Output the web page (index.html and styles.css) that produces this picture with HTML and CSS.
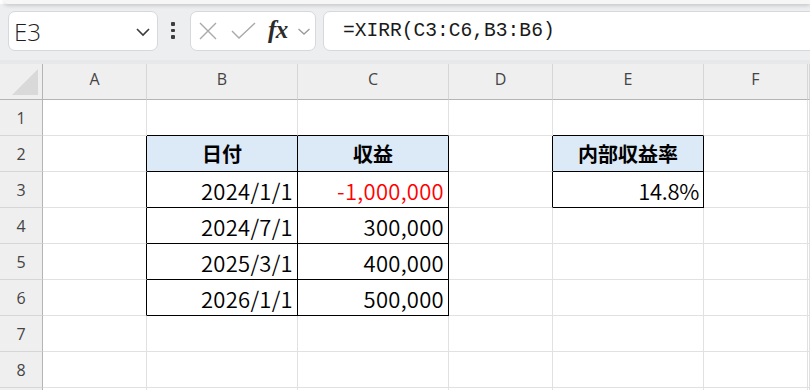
FILE: index.html
```html
<!DOCTYPE html>
<html lang="ja">
<head>
<meta charset="utf-8">
<title>XIRR</title>
<link rel="stylesheet" href="styles.css">
</head>
<body>
<div class="ribbon"></div>
<div class="toolbar">
  <div class="namebox">
    <span class="nb-text">E3</span>
    <svg class="chev" width="16" height="10" viewBox="0 0 16 10"><path d="M2 2 L8 8 L14 2" fill="none" stroke="#3c3c3c" stroke-width="1.6"/></svg>
  </div>
  <div class="dots"><i></i><i></i><i></i></div>
  <div class="fxbox">
    <svg class="ico-x" width="20" height="20" viewBox="0 0 20 20"><path d="M2 2 L18 18 M18 2 L2 18" fill="none" stroke="#a9a9a9" stroke-width="1.4"/></svg>
    <svg class="ico-ok" width="26" height="20" viewBox="0 0 26 20"><path d="M1 10 L8 17 L24 2" fill="none" stroke="#a9a9a9" stroke-width="1.4"/></svg>
    <span class="fx">fx</span>
    <svg class="chev2" width="14" height="9" viewBox="0 0 14 9"><path d="M1.5 2 L7 7 L12.5 2" fill="none" stroke="#9a9a9a" stroke-width="1.3"/></svg>
  </div>
  <div class="formula">=XIRR(C3:C6,B3:B6)</div>
</div>
<div class="sheet">
  <div class="corner"><span class="tri"></span></div>
  <div class="ch">A</div><div class="ch">B</div><div class="ch">C</div><div class="ch">D</div><div class="ch">E</div><div class="ch">F</div><div class="ch"></div>

  <div class="rh">1</div><div class="c"></div><div class="c bb"></div><div class="c bb"></div><div class="c"></div><div class="c bb"></div><div class="c"></div><div class="c"></div>

  <div class="rh">2</div><div class="c br"></div><div class="c br bb head">日付</div><div class="c br bb head">収益</div><div class="c br"></div><div class="c br bb head">内部収益率</div><div class="c"></div><div class="c"></div>

  <div class="rh">3</div><div class="c br"></div><div class="c br bb num">2024/1/1</div><div class="c br bb num neg">-1,000,000</div><div class="c br"></div><div class="c br bb num pct">14.8%</div><div class="c"></div><div class="c"></div>

  <div class="rh">4</div><div class="c br"></div><div class="c br bb num">2024/7/1</div><div class="c br bb num">300,000</div><div class="c"></div><div class="c"></div><div class="c"></div><div class="c"></div>

  <div class="rh">5</div><div class="c br"></div><div class="c br bb num">2025/3/1</div><div class="c br bb num">400,000</div><div class="c"></div><div class="c"></div><div class="c"></div><div class="c"></div>

  <div class="rh">6</div><div class="c br"></div><div class="c br bb num">2026/1/1</div><div class="c br bb num">500,000</div><div class="c"></div><div class="c"></div><div class="c"></div><div class="c"></div>

  <div class="rh">7</div><div class="c"></div><div class="c"></div><div class="c"></div><div class="c"></div><div class="c"></div><div class="c"></div><div class="c"></div>

  <div class="rh">8</div><div class="c"></div><div class="c"></div><div class="c"></div><div class="c"></div><div class="c"></div><div class="c"></div><div class="c"></div>

  <div class="rh"></div><div class="c"></div><div class="c"></div><div class="c"></div><div class="c"></div><div class="c"></div><div class="c"></div><div class="c"></div>
</div>
</body>
</html>
```

FILE: styles.css
```css
* { box-sizing: border-box; }
html, body {
  margin: 0;
  padding: 0;
  width: 810px;
  height: 390px;
  overflow: hidden;
  background: #ffffff;
  font-family: "Noto Sans CJK JP", "Noto Sans", sans-serif;
}
.ribbon {
  height: 4px;
  margin-left: 4px;
  background: #f6f6f7;
  border-bottom-left-radius: 8px;
  box-shadow: 0 1px 4px rgba(0, 0, 0, 0.22);
  position: relative;
  z-index: 1;
}
.toolbar {
  height: 60px;
  background: #edeef0;
  border-bottom: 4px solid #e7e8ea;
  display: flex;
  align-items: center;
  padding: 0 0 3px 8px;
}
.namebox {
  width: 150px;
  height: 40px;
  background: #fff;
  border: 1px solid #d6d8db;
  border-radius: 7px;
  display: flex;
  align-items: center;
  justify-content: space-between;
  padding: 0 6px 0 5px;
}
.nb-text {
  font-family: "Open Sans", "Noto Sans", sans-serif;
  font-weight: 300;
  font-size: 24px;
  color: #1f1f1f;
  margin-top: 2px;
}
.chev { margin-top: 2px; }
.dots {
  width: 32px;
  height: 40px;
  display: flex;
  flex-direction: column;
  align-items: center;
  justify-content: center;
  gap: 3px;
  padding-right: 2px;
}
.dots i {
  display: block;
  width: 3.5px;
  height: 3.5px;
  border-radius: 1px;
  background: #3d3d3d;
}
.fxbox {
  width: 126px;
  height: 40px;
  background: #fff;
  border: 1px solid #d6d8db;
  border-radius: 7px;
  display: flex;
  align-items: center;
  padding-left: 7px;
}
.ico-ok { margin-left: 13px; }
.fx {
  font-family: "Liberation Serif", "DejaVu Serif", serif;
  font-style: italic;
  font-weight: bold;
  font-size: 25px;
  color: #2b2b2b;
  margin-left: 11px;
  letter-spacing: -0.5px;
  line-height: 1;
  margin-top: -3px;
}
.chev2 { margin-left: 9px; margin-top: 1px; }
.formula {
  flex: 1;
  height: 40px;
  margin-left: 7px;
  margin-right: -12px;
  background: #fff;
  border: 1px solid #d6d8db;
  border-radius: 7px;
  display: flex;
  align-items: center;
  padding-left: 19px;
  font-family: "Liberation Mono", "DejaVu Sans Mono", monospace;
  font-size: 19.6px;
  color: #1a1a1a;
}
.sheet {
  display: grid;
  grid-template-columns: 43px 104px 151px 151px 104px 151px 104px 2px;
  grid-template-rows: 36px repeat(9, 36px);
}
.corner {
  background: #efefef;
  border-right: 1px solid #b4b4b4;
  border-bottom: 1px solid #b4b4b4;
  position: relative;
}
.tri {
  position: absolute;
  right: 4px;
  bottom: 4px;
  width: 0;
  height: 0;
  border-left: 26px solid transparent;
  border-bottom: 26px solid #d9d9d9;
}
.ch {
  background: #efefef;
  border-right: 1px solid #d6d6d6;
  border-bottom: 1px solid #b4b4b4;
  display: flex;
  align-items: center;
  justify-content: center;
  font-family: "Open Sans", "Noto Sans", sans-serif;
  font-size: 16px;
  color: #444;
  padding-bottom: 6px;
}
.rh {
  background: #efefef;
  border-right: 1px solid #b4b4b4;
  border-bottom: 1px solid #d6d6d6;
  display: flex;
  align-items: center;
  justify-content: center;
  font-family: "Open Sans", "Noto Sans", sans-serif;
  font-size: 16px;
  color: #444;
}
.c {
  border-right: 1px solid #e1e1e1;
  border-bottom: 1px solid #e1e1e1;
  display: flex;
  align-items: center;
  font-size: 21px;
  color: #000;
  white-space: nowrap;
}
.c.br { border-right-color: #000; }
.c.bb { border-bottom-color: #000; }
.head {
  background: #dce9f6;
  justify-content: center;
  font-weight: bold;
  font-size: 20px;
}
.num {
  justify-content: flex-end;
  padding-right: 4px;
  font-size: 22px;
  font-weight: 350;
  letter-spacing: 0.3px;
}
.pct { letter-spacing: -0.3px; }
.neg { color: #ff0000; }
```
